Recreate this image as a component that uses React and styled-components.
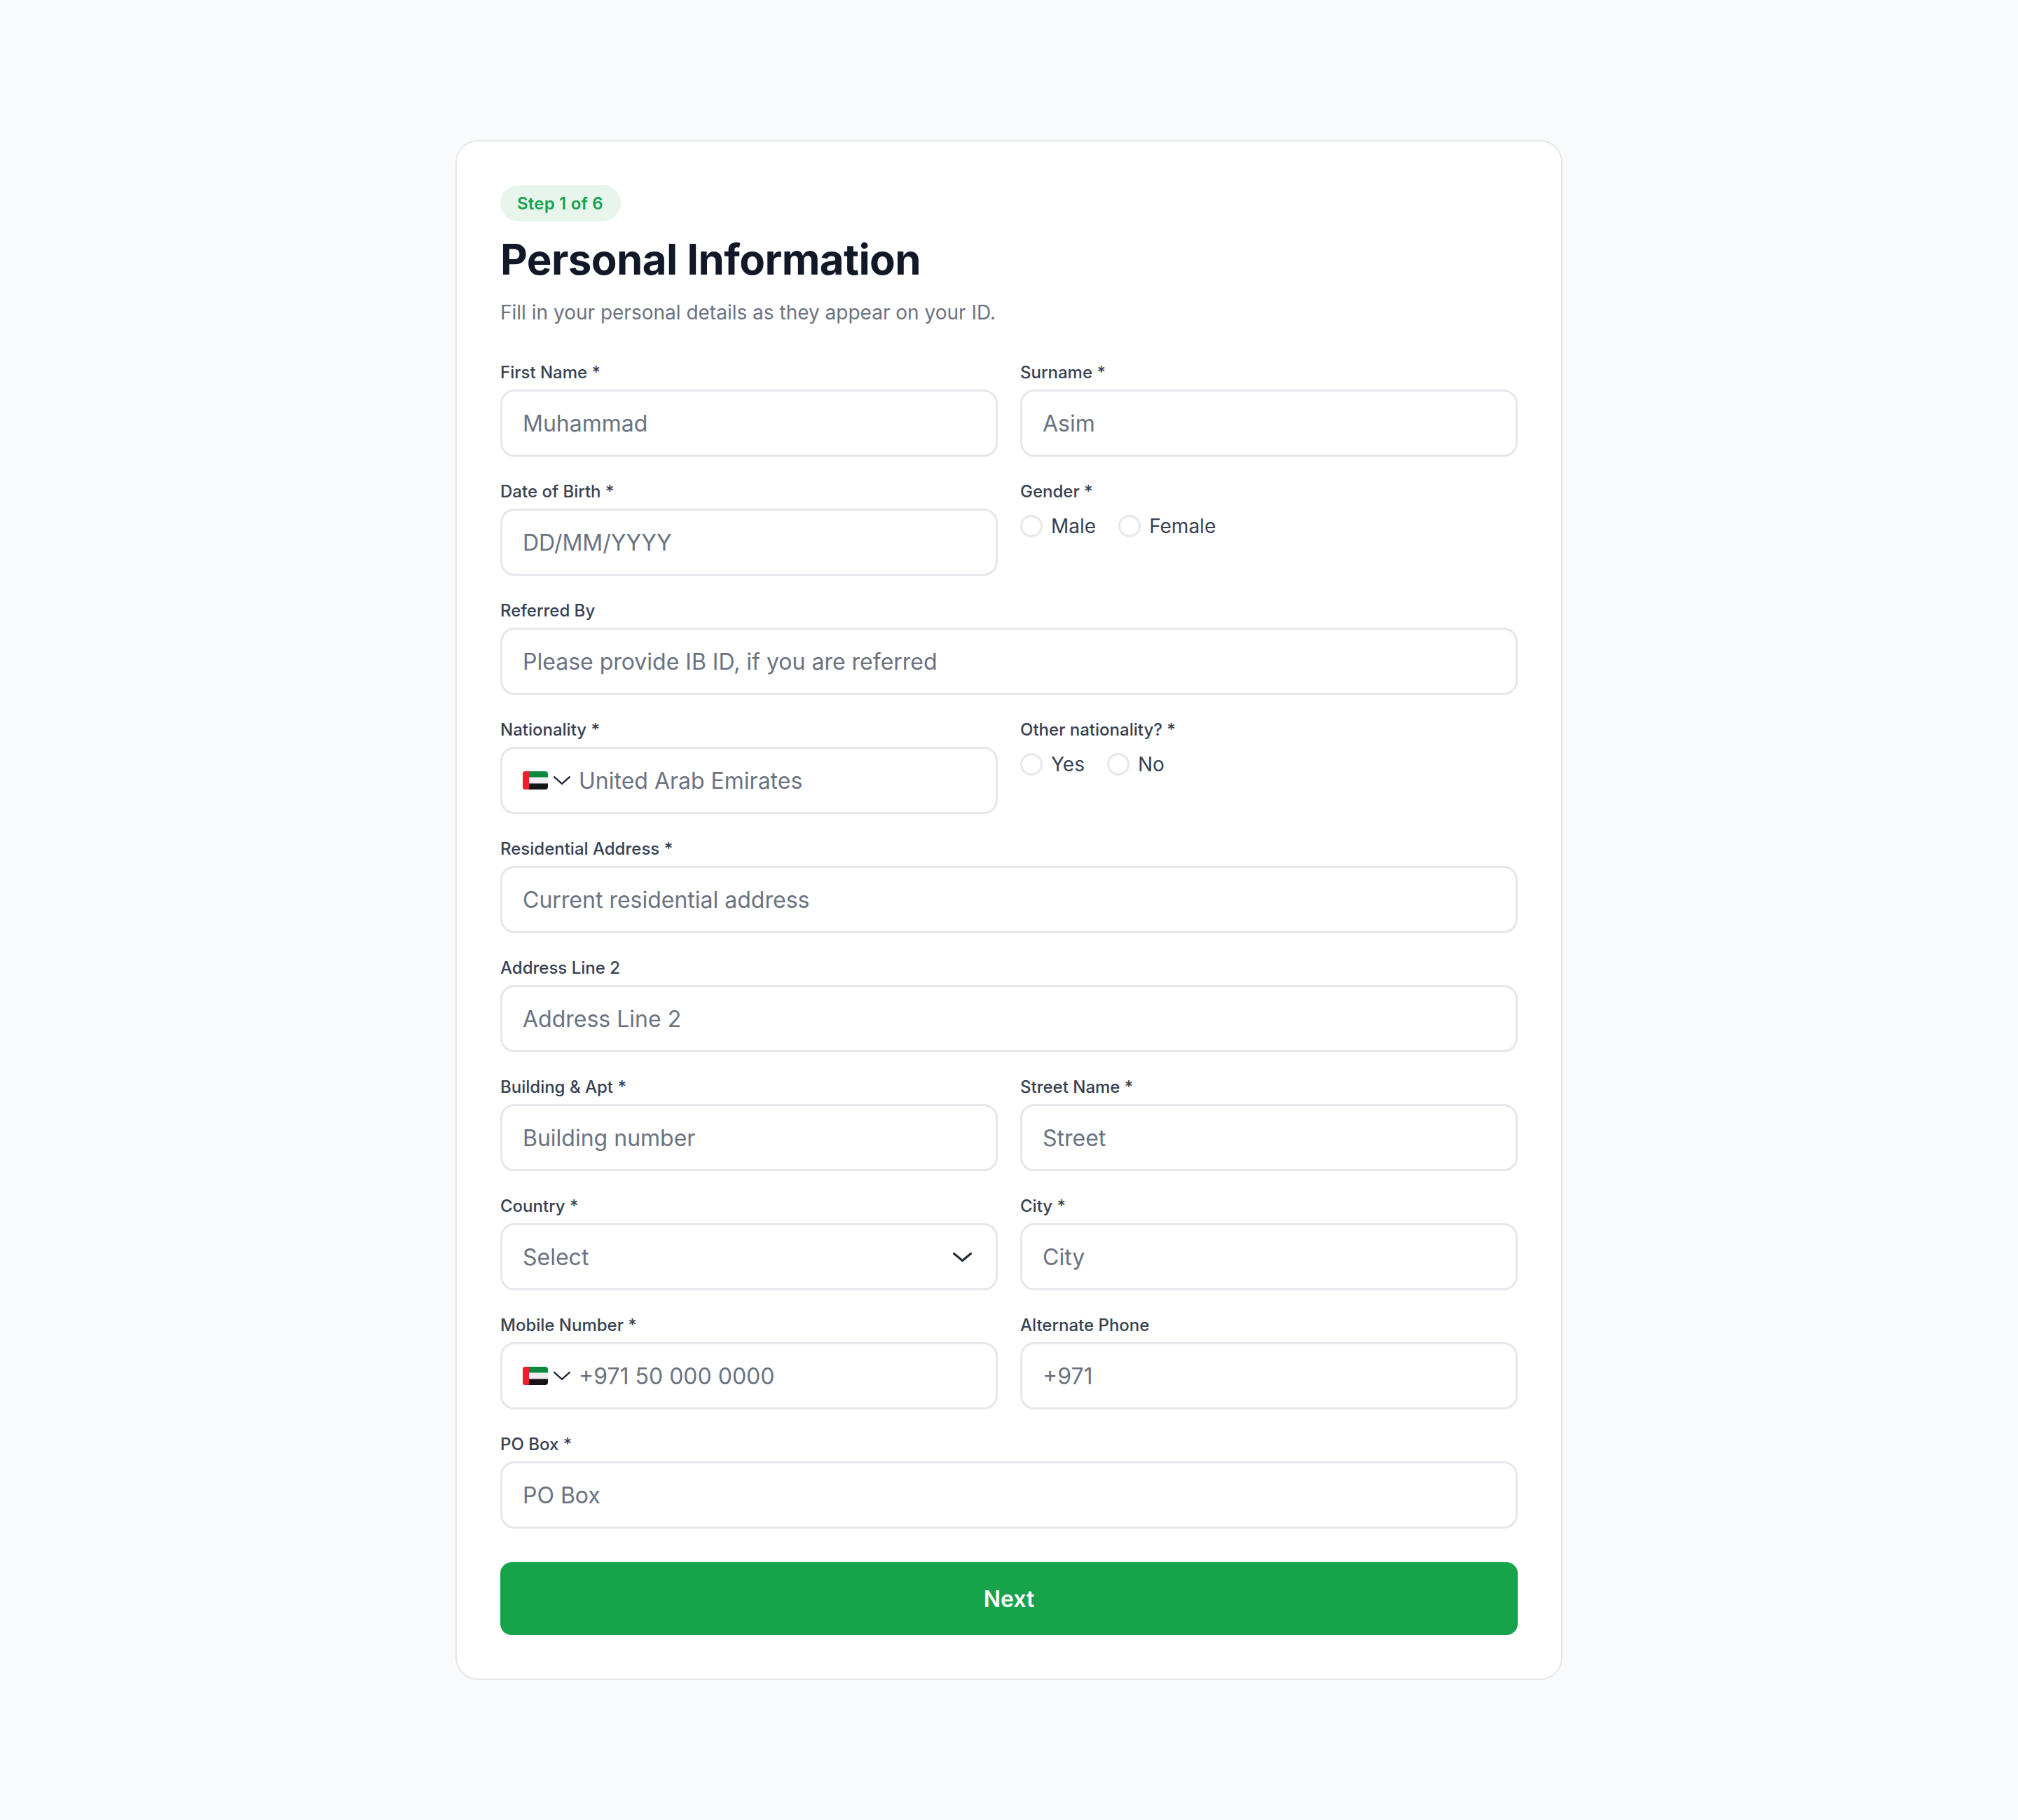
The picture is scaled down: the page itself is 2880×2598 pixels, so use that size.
import React from "react";
import styled, { createGlobalStyle } from "styled-components";

const Global = createGlobalStyle`
  * { box-sizing: border-box; }
  html, body { margin: 0; padding: 0; background: #f9fafb; }
  body { font-family: Inter, "Noto Sans", sans-serif; }
`;

const Page = styled.main`
  min-height: 2598px;
  padding: 200px 0;
  display: flex;
  justify-content: center;
  align-items: flex-start;
  background: #f9fafb;
`;

const Card = styled.form`
  width: 1580px;
  padding: 62px;
  background: #ffffff;
  border: 2px solid #e5e7eb;
  border-radius: 32px;
  display: flex;
  flex-direction: column;
`;

const Badge = styled.span`
  align-self: flex-start;
  height: 52px;
  padding: 0 25px 0 24px;
  display: inline-flex;
  align-items: center;
  border-radius: 26px;
  background: #e8f5ed;
  color: #16a34a;
  font-size: 24px;
  font-weight: 600;
  letter-spacing: 0.2px;
`;

const Title = styled.h1`
  margin: 18px 0 0;
  color: #111827;
  font-size: 60px;
  line-height: 72px;
  font-weight: 700;
  letter-spacing: -0.6px;
`;

const Subtitle = styled.p`
  margin: 20px 0 0;
  color: #6b7280;
  font-size: 28px;
  line-height: 40px;
`;

const Fields = styled.div`
  margin-top: 48px;
  display: grid;
  grid-template-columns: 1fr 1fr;
  column-gap: 32px;
  row-gap: 32px;
`;

const Field = styled.div`
  grid-column: ${(p) => (p.$full ? "1 / -1" : "auto")};
  min-width: 0;
`;

const Label = styled.label`
  display: block;
  height: 36px;
  margin-bottom: 6px;
  color: #374151;
  font-size: 24px;
  line-height: 36px;
  font-weight: 500;
`;

const Box = styled.div`
  height: 96px;
  padding: 0 29px;
  display: flex;
  align-items: center;
  background: #ffffff;
  border: 3px solid #e5e7eb;
  border-radius: 20px;
`;

const Input = styled.input`
  flex: 1;
  min-width: 0;
  padding: 0;
  border: 0;
  outline: 0;
  background: transparent;
  color: #111827;
  font: 400 32px Inter, sans-serif;
  &::placeholder { color: #6b7280; opacity: 1; }
`;

const Flag = styled.svg`
  width: 36px;
  height: 26px;
  flex: none;
  border-radius: 4px;
`;

const Chevron = styled.svg`
  flex: none;
  width: ${(p) => p.$w}px;
  height: ${(p) => p.$h}px;
  margin: 0 ${(p) => p.$mr}px 0 ${(p) => p.$ml}px;
  fill: none;
  stroke: #1f2937;
  stroke-linecap: round;
  stroke-linejoin: round;
`;

const Radios = styled.div`
  display: flex;
  align-items: center;
  gap: 32px;
  height: 36px;
  margin-top: 13px;
`;

const RadioOption = styled.label`
  display: flex;
  align-items: center;
  gap: 12px;
  color: #374151;
  font-size: 28px;
`;

const RadioDot = styled.input.attrs({ type: "radio" })`
  appearance: none;
  margin: 0;
  width: 32px;
  height: 32px;
  border: 3px solid #e5e7eb;
  border-radius: 50%;
  background: #fff;
`;

const Next = styled.button`
  margin-top: 48px;
  height: 104px;
  width: 100%;
  border: 0;
  border-radius: 16px;
  background: #16a34a;
  color: #ffffff;
  font: 600 32px Inter, sans-serif;
`;

const UaeFlag = () => (
  <Flag viewBox="0 0 36 26" aria-hidden="true">
    <rect width="36" height="8.7" fill="#07893f" />
    <rect y="8.7" width="36" height="8.7" fill="#eeeeee" />
    <rect y="17.4" width="36" height="8.6" fill="#141414" />
    <rect width="9" height="26" fill="#ef2029" />
  </Flag>
);

const Down = ({ w, h, sw, ml = 0, mr = 0 }) => (
  <Chevron viewBox={`0 0 ${w} ${h}`} $w={w} $h={h} $ml={ml} $mr={mr} strokeWidth={sw}>
    <path d={`M${sw / 2} ${sw / 2} L${w / 2} ${h - sw / 2} L${w - sw / 2} ${sw / 2}`} />
  </Chevron>
);

const TextField = ({ label, placeholder, full }) => (
  <Field $full={full}>
    <Label>{label}</Label>
    <Box><Input placeholder={placeholder} /></Box>
  </Field>
);

const FlagField = ({ label, placeholder }) => (
  <Field>
    <Label>{label}</Label>
    <Box>
      <UaeFlag />
      <Down w={24} h={12} sw={2.4} ml={8} mr={12} />
      <Input placeholder={placeholder} />
    </Box>
  </Field>
);

const RadioField = ({ label, name, options }) => (
  <Field>
    <Label>{label}</Label>
    <Radios>
      {options.map((o) => (
        <RadioOption key={o}><RadioDot name={name} />{o}</RadioOption>
      ))}
    </Radios>
  </Field>
);

export default function App() {
  return (
    <>
      <Global />
      <Page>
        <Card onSubmit={(e) => e.preventDefault()}>
          <Badge>Step 1 of 6</Badge>
          <Title>Personal Information</Title>
          <Subtitle>Fill in your personal details as they appear on your ID.</Subtitle>
          <Fields>
            <TextField label="First Name *" placeholder="Muhammad" />
            <TextField label="Surname *" placeholder="Asim" />
            <TextField label="Date of Birth *" placeholder="DD/MM/YYYY" />
            <RadioField label="Gender *" name="gender" options={["Male", "Female"]} />
            <TextField full label="Referred By" placeholder="Please provide IB ID, if you are referred" />
            <FlagField label="Nationality *" placeholder="United Arab Emirates" />
            <RadioField label="Other nationality? *" name="other" options={["Yes", "No"]} />
            <TextField full label="Residential Address *" placeholder="Current residential address" />
            <TextField full label="Address Line 2" placeholder="Address Line 2" />
            <TextField label="Building & Apt *" placeholder="Building number" />
            <TextField label="Street Name *" placeholder="Street" />
            <Field>
              <Label>Country *</Label>
              <Box>
                <Input placeholder="Select" readOnly />
                <Down w={27} h={13} sw={3} mr={5} />
              </Box>
            </Field>
            <TextField label="City *" placeholder="City" />
            <FlagField label="Mobile Number *" placeholder="+971 50 000 0000" />
            <TextField label="Alternate Phone" placeholder="+971" />
            <TextField full label="PO Box *" placeholder="PO Box" />
          </Fields>
          <Next type="submit">Next</Next>
        </Card>
      </Page>
    </>
  );
}
